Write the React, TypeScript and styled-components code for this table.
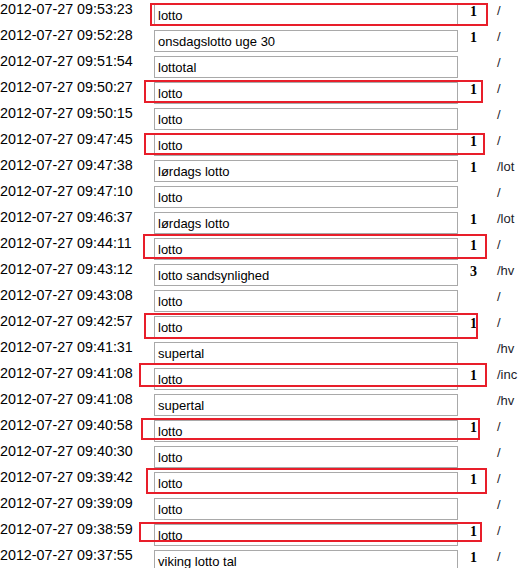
import React from 'react';
import styled, { createGlobalStyle } from 'styled-components';

const GlobalStyle = createGlobalStyle`
    html, body {
        margin: 0;
        padding: 0;
        background: #ffffff;
        overflow: hidden;
    }
`;

const Table = styled.div`
    display: flex;
    flex-direction: column;
    width: 519px;
    color: #000000;
`;

const Row = styled.div`
    position: relative;
    display: flex;
    align-items: flex-start;
    height: 26px;
    white-space: nowrap;
`;

const Time = styled.div`
    width: 154px;
    flex: none;
    padding-top: 1px;
    font-family: 'Liberation Sans', Arial, sans-serif;
    font-size: 14.3px;
    line-height: 17px;
`;

const Keyword = styled.div`
    box-sizing: border-box;
    flex: none;
    width: 304px;
    height: 22px;
    margin-top: 4px;
    padding: 0 3px;
    border: 1px solid #a9a9a9;
    background: #ffffff;
    font-family: 'Liberation Sans', Arial, sans-serif;
    font-size: 13px;
    line-height: 21px;
    overflow: hidden;
`;

const Count = styled.div`
    box-sizing: border-box;
    flex: none;
    width: 39px;
    padding: 3px 0 0 12px;
    font-family: 'Liberation Serif', 'Times New Roman', serif;
    font-weight: bold;
    font-size: 14px;
    line-height: 17px;
`;

const Path = styled.div`
    flex: none;
    padding-top: 2px;
    font-family: 'Liberation Sans', Arial, sans-serif;
    font-size: 13px;
    line-height: 17px;
    color: #1b1b2a;
`;

// hand drawn highlight boxes lying over the rows
const Highlight = styled.div`
    position: absolute;
    box-sizing: border-box;
    border: 2px solid #e81e2a;
    pointer-events: none;
`;

type Mark = { left: number; top: number; width: number; height: number };

type Entry = {
    time: string;
    keyword: string;
    count?: string;
    path: string;
    mark?: Mark;
};

const entries: Entry[] = [
    { time: '09:53:23', keyword: 'lotto', count: '1', path: '/', mark: { left: 150, top: 3, width: 338, height: 23 } },
    { time: '09:52:28', keyword: 'onsdagslotto uge 30', count: '1', path: '/' },
    { time: '09:51:54', keyword: 'lottotal', path: '/' },
    { time: '09:50:27', keyword: 'lotto', count: '1', path: '/', mark: { left: 144, top: 2, width: 339, height: 23 } },
    { time: '09:50:15', keyword: 'lotto', path: '/' },
    { time: '09:47:45', keyword: 'lotto', count: '1', path: '/', mark: { left: 144, top: 3, width: 341, height: 22 } },
    { time: '09:47:38', keyword: 'lørdags lotto', count: '1', path: '/lot' },
    { time: '09:47:10', keyword: 'lotto', path: '/' },
    { time: '09:46:37', keyword: 'lørdags lotto', count: '1', path: '/lot' },
    { time: '09:44:11', keyword: 'lotto', count: '1', path: '/', mark: { left: 143, top: 0, width: 344, height: 25 } },
    { time: '09:43:12', keyword: 'lotto sandsynlighed', count: '3', path: '/hv' },
    { time: '09:43:08', keyword: 'lotto', path: '/' },
    { time: '09:42:57', keyword: 'lotto', count: '1', path: '/', mark: { left: 144, top: 1, width: 334, height: 26 } },
    { time: '09:41:31', keyword: 'supertal', path: '/hv' },
    { time: '09:41:08', keyword: 'lotto', count: '1', path: '/inc', mark: { left: 139, top: -1, width: 348, height: 24 } },
    { time: '09:41:08', keyword: 'supertal', path: '/hv' },
    { time: '09:40:58', keyword: 'lotto', count: '1', path: '/', mark: { left: 141, top: 2, width: 339, height: 22 } },
    { time: '09:40:30', keyword: 'lotto', path: '/' },
    { time: '09:39:42', keyword: 'lotto', count: '1', path: '/', mark: { left: 146, top: 0, width: 341, height: 26 } },
    { time: '09:39:09', keyword: 'lotto', path: '/' },
    { time: '09:38:59', keyword: 'lotto', count: '1', path: '/', mark: { left: 139, top: 2, width: 343, height: 20 } },
    { time: '09:37:55', keyword: 'viking lotto tal', count: '1', path: '/' },
];

const App = () => (
    <>
        <GlobalStyle />
        <Table>
            {entries.map((entry, i) => (
                <Row key={i}>
                    <Time>2012-07-27 {entry.time}</Time>
                    <Keyword>{entry.keyword}</Keyword>
                    <Count>{entry.count}</Count>
                    <Path>{entry.path}</Path>
                    {entry.mark && <Highlight style={entry.mark} />}
                </Row>
            ))}
        </Table>
    </>
);

export default App;
